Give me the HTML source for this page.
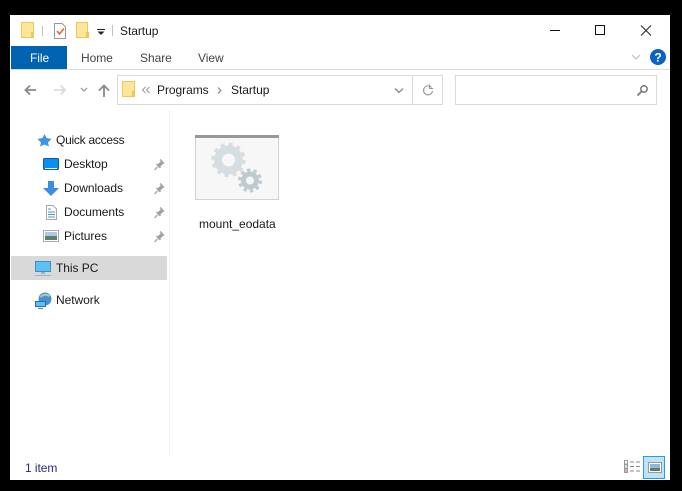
<!DOCTYPE html>
<html><head><meta charset="utf-8"><style>
html,body{margin:0;padding:0;background:#000;width:682px;height:491px;overflow:hidden}
#w{position:absolute;left:10px;top:15px;width:660px;height:465px;background:#fff}
.t{position:absolute;font:12px/16px "Liberation Sans",sans-serif;color:#1a1a1a;white-space:nowrap;letter-spacing:-.05px}
svg{position:absolute;left:0;top:0}
</style></head><body>
<div id="w"></div>
<div style="position:absolute;left:11px;top:46px;width:56px;height:23px;background:#0063b1"></div>
<div style="position:absolute;left:11px;top:69px;width:659px;height:1px;background:#dadada"></div>
<div style="position:absolute;left:117px;top:75px;box-sizing:border-box;width:296px;height:30px;border:1px solid #d9d9d9"></div>
<div style="position:absolute;left:413px;top:75px;width:30px;height:30px;border:1px solid #d9d9d9;border-left:0;box-sizing:border-box"></div>
<div style="position:absolute;left:455px;top:75px;width:202px;height:30px;border:1px solid #d9d9d9;box-sizing:border-box"></div>
<div style="position:absolute;left:11px;top:256px;width:156px;height:24px;background:#d9d9d9"></div>
<div style="position:absolute;left:169px;top:110px;width:1px;height:347px;background:#f2f2f2"></div>
<div style="position:absolute;left:643px;top:456px;width:22px;height:23px;box-sizing:border-box;border:1px solid #26a0da;background:#bfe4f8"></div>

<span class="t" style="left:120px;top:23px">Startup</span>
<span class="t" style="left:30px;top:50px;color:#fff">File</span>
<span class="t" style="left:81px;top:50px;color:#444">Home</span>
<span class="t" style="left:140px;top:50px;color:#444">Share</span>
<span class="t" style="left:198px;top:50px;color:#444">View</span>
<span class="t" style="left:157px;top:82px">Programs</span>
<span class="t" style="left:231px;top:82px">Startup</span>
<span class="t" style="left:56px;top:132px;letter-spacing:-.25px">Quick access</span>
<span class="t" style="left:64px;top:156px">Desktop</span>
<span class="t" style="left:64px;top:180px">Downloads</span>
<span class="t" style="left:64px;top:204px">Documents</span>
<span class="t" style="left:64px;top:228px">Pictures</span>
<span class="t" style="left:56px;top:260px">This PC</span>
<span class="t" style="left:56px;top:292px">Network</span>
<span class="t" style="left:199px;top:216px;letter-spacing:0">mount_eodata</span>
<span class="t" style="left:25px;top:460px;color:#2a2a7a">1 item</span>

<svg width="682" height="491" viewBox="0 0 682 491">
<!-- title bar icons -->
<g fill="#fde59a" stroke="#ecc75a">
<rect x="21.500" y="22.500" width="12" height="15"/>
<rect x="76.500" y="22.500" width="11" height="15"/>
<rect x="122.500" y="81.500" width="12" height="15"/>
</g>
<g fill="#ecc75a"><rect x="31" y="32" width="3" height="6"/><rect x="86" y="32" width="3" height="6"/><rect x="132" y="91" width="3" height="6"/></g>
<path d="M42.500 26V36M112.500 25V36" stroke="#c0c0c0"/>
<path d="M54.500 23.500H62L65.500 27V38.500H54.500Z" fill="#fff" stroke="#999"/>
<path d="M57 31L59.500 34L64 28.500" fill="none" stroke="#e2622c" stroke-width="1.500"/>
<path d="M97.500 31.500h7l-3.500 3.500z" fill="#222"/>
<rect x="97" y="29" width="8" height="1" fill="#222"/>
<!-- window controls -->
<rect x="550" y="30" width="10" height="1" fill="#111"/>
<rect x="595.500" y="25.500" width="9" height="9" fill="none" stroke="#111"/>
<path d="M641 25.500L651 35.500M651 25.500L641 35.500" stroke="#222" fill="none"/>
<path d="M632 55L636 59L640 55" fill="none" stroke="#bbb"/>
<circle cx="658" cy="57" r="8" fill="#0a63c4"/>
<text x="658" y="61.500" text-anchor="middle" font-family="Liberation Sans" font-weight="bold" font-size="12" fill="#fff">?</text>
<!-- nav -->
<path d="M36 90H25.500M30 85.500L25.500 90L30 94.500" fill="none" stroke="#8a8a8a" stroke-width="1.800"/>
<path d="M54 90H65M60.500 85.500L65 90L60.500 94.500" fill="none" stroke="#dcdcdc" stroke-width="1.800"/>
<path d="M81 88L84 91L87 88" fill="none" stroke="#a0a0a0" stroke-width="1.300"/>
<path d="M104 97V85.500M99 90.500L104 85.500L109 90.500" fill="none" stroke="#8a8a8a" stroke-width="1.800"/>
<path d="M145.500 87L142.500 90L145.500 93M149.500 87L146.500 90L149.500 93" fill="none" stroke="#999"/>
<path d="M218 87.500L221 90.500L218 93.500" fill="none" stroke="#999" stroke-width="1.300"/>
<path d="M395 88.500L399 92.500L403 88.500" fill="none" stroke="#888" stroke-width="1.300"/>
<path d="M431.500 87.500A4.500 4.500 0 1 0 432.500 91" fill="none" stroke="#999" stroke-width="1.100"/>
<path d="M429.500 84.500V88.500H433" fill="none" stroke="#999" stroke-width="1.100"/>
<circle cx="644" cy="89" r="3.200" fill="none" stroke="#777" stroke-width="1.500"/>
<path d="M641.500 91.500L637.500 95.500" stroke="#888" stroke-width="2"/>
<!-- nav pane icons -->
<path d="M44.500 134L46.500 138L51.500 139L48 142.500L49 146.500L44.500 144.500L40 146.500L41 142.500L37.500 139L42.500 138Z" fill="#3a96e4"/>
<rect x="43.500" y="158.500" width="15" height="11" rx="1" fill="#0a8ef0" stroke="#0a5ea8"/>
<rect x="45" y="168" width="12" height="1" fill="#e8f4ff"/>
<path d="M48 181H54V188H59L51 196L43 188H48Z" fill="#3a8ee6"/>
<path d="M46.500 205.500H53L56.500 209V219.500H46.500Z" fill="#fff" stroke="#a8a8a8"/>
<path d="M48 209H51M48 212H55M48 214.500H55M48 217H55" stroke="#4a9ad6"/>
<rect x="43.500" y="230.500" width="15" height="11" fill="#fff" stroke="#aaa"/>
<rect x="45" y="232" width="12" height="4" fill="#a8cbe8"/>
<rect x="45" y="236" width="12" height="4" fill="#5f7f68"/>
<rect x="35.500" y="261.500" width="15" height="10" fill="#5bc0f5" stroke="#4a8cb5"/>
<rect x="35" y="275" width="16" height="1" fill="#98b4c6"/>
<rect x="41" y="272" width="4" height="2" fill="#98b4c6"/>
<circle cx="45" cy="299" r="6.500" fill="#4a90d0"/>
<path d="M40.500 297q4-4 9-1" stroke="#a8d4a0" fill="none" stroke-width="2"/>
<rect x="35.500" y="301.500" width="10" height="5" fill="#5bc0f5" stroke="#2f6f9f"/>
<rect x="38" y="308" width="5" height="1" fill="#4b7fa6"/>
<g fill="#a0a0a0" stroke="#a0a0a0">
<g id="p"><path d="M158 166.500L162 162.500" stroke-width="3.500" fill="none"/><path d="M156.500 164L160.500 168" stroke-width="1.500" fill="none"/><path d="M160 159.500L164 163.500" stroke-width="1.500" fill="none"/><path d="M154.500 170L157.500 167" stroke-width="1.200" fill="none"/></g>
<use href="#p" y="24"/><use href="#p" y="48"/><use href="#p" y="72"/>
</g>
<!-- file icon -->
<rect x="195.500" y="136.500" width="83" height="63" fill="#f7f7f7" stroke="#d0d3d4"/>
<rect x="195" y="135" width="84" height="3" fill="#96999a"/>
<circle cx="228.500" cy="160" r="15.500" fill="none" stroke="#d6dee2" stroke-width="3.500" stroke-dasharray="4 4.120"/>
<circle cx="228.500" cy="160" r="10.500" fill="none" stroke="#d6dee2" stroke-width="8"/>
<circle cx="250" cy="180.500" r="10.500" fill="none" stroke="#c0cace" stroke-width="3" stroke-dasharray="3.300 3.300"/>
<circle cx="250" cy="180.500" r="6.500" fill="none" stroke="#c0cace" stroke-width="5"/>
<!-- status bar -->
<rect x="624.500" y="460.500" width="3" height="3.500" fill="#fff" stroke="#999"/>
<rect x="624.500" y="464.500" width="3" height="4" fill="#cfe4f5" stroke="#999"/>
<rect x="624.500" y="468.500" width="3" height="4" fill="#e8b0a0" stroke="#999"/>
<path d="M630 462H634M636 462H640M630 466.500H634M636 466.500H640M630 471H634M636 471H640" stroke="#8a8a8a"/>
<rect x="648.500" y="462.500" width="13" height="10" fill="#fff" stroke="#999"/>
<rect x="650" y="464" width="10" height="4" fill="#8cb8dc"/>
<rect x="650" y="468" width="10" height="3" fill="#5f7f68"/>
</svg>
</body></html>
